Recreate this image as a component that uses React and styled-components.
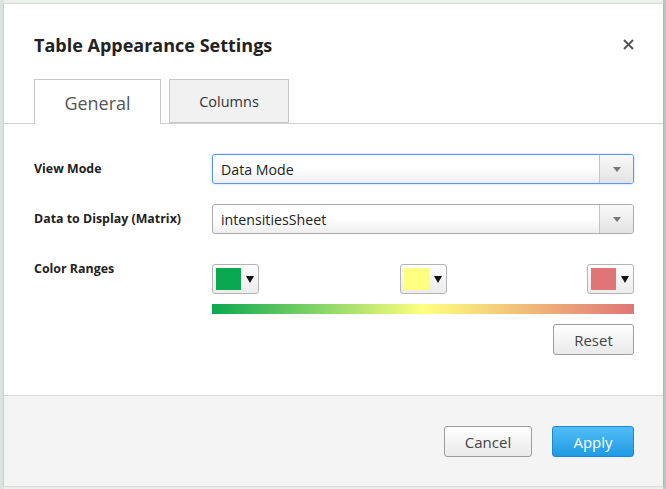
import React from "react";
import styled, { createGlobalStyle } from "styled-components";

const Global = createGlobalStyle`
  html, body { margin: 0; padding: 0; }
  body {
    width: 666px; height: 489px; overflow: hidden;
    background: #e4e8e5;
    font-family: "Open Sans", "Liberation Sans", sans-serif;
  }
`;

const Page = styled.div`
  width: 666px;
  height: 489px;
  box-sizing: border-box;
  padding: 4px 3px 3px 4px;
  background:
    linear-gradient(to right, #dfe3e0 0 4px, transparent 4px),
    linear-gradient(to left, #b9cbc1 0 3px, transparent 3px),
    #eef0ee;
`;

const Dialog = styled.div`
  width: 659px;
  height: 482px;
  background: #fff;
  display: flex;
  flex-direction: column;
  box-shadow: 0 0 2px rgba(0,0,0,0.25);
`;

const Header = styled.div`
  height: 75px;
  display: flex;
  align-items: center;
  justify-content: space-between;
  padding: 0 30px 0 30px;
  box-sizing: border-box;
`;

const Title = styled.h2`
  margin: 0;
  margin-top: 6px;
  font-size: 18px;
  font-weight: 700;
  color: #222;
`;

const Close = styled.button`
  border: 0;
  background: none;
  padding: 0;
  margin-top: 6px;
  margin-right: -1px;
  width: 11px;
  height: 11px;
  display: flex;
  cursor: pointer;
`;

const TabBar = styled.div`
  display: flex;
  gap: 8px;
  padding-left: 30px;
  border-bottom: 1px solid #cfcfcf;
  height: 44px;
`;

const Tab = styled.div`
  width: ${p => p.$w}px;
  box-sizing: border-box;
  height: ${p => (p.$active ? 45 : 44)}px;
  border: 1px solid #c8c8c8;
  border-bottom: ${p => (p.$active ? "0" : "1px solid #c8c8c8")};
  background: ${p => (p.$active ? "#fff" : "#f1f1f1")};
  display: flex;
  align-items: center;
  justify-content: center;
  font-size: ${p => (p.$active ? 18 : 14.5)}px;
  color: ${p => (p.$active ? "#555" : "#333")};
  padding-top: ${p => (p.$active ? 2 : 0)}px;
`;

const Body = styled.div`
  flex: 1;
  padding: 30px 29px 0 30px;
  display: flex;
  flex-direction: column;
`;

const Row = styled.div`
  display: grid;
  grid-template-columns: 178px 1fr;
  align-items: ${p => (p.$top ? "start" : "center")};
  margin-bottom: ${p => p.$gap || 0}px;
`;

const Label = styled.div`
  font-size: 12.4px;
  font-weight: 700;
  color: #222;
  margin-top: ${p => (p.$top ? -4 : -2)}px;
`;

const Select = styled.div`
  height: 30px;
  box-sizing: border-box;
  border: 1px solid ${p => (p.$focus ? "#5b97f0" : "#aaaaaa")};
  box-shadow: ${p => (p.$focus ? "0 0 2px rgba(80,140,240,0.5)" : "none")};
  border-radius: 3px;
  background: linear-gradient(#ffffff, #ffffff 50%, #eeeeee);
  display: flex;
  align-items: stretch;
  overflow: hidden;
`;

const SelectText = styled.div`
  flex: 1;
  display: flex;
  align-items: center;
  padding-left: 8px;
  font-size: 14.2px;
  color: #222;
`;

const SelectArrow = styled.div`
  width: 33px;
  border-left: 1px solid #c4c4c4;
  background: linear-gradient(#f9f9f9, #e3e3e3);
  display: flex;
  align-items: center;
  justify-content: center;
`;

const ColorArea = styled.div`
  display: flex;
  flex-direction: column;
`;

const Pickers = styled.div`
  display: flex;
  justify-content: space-between;
`;

const Picker = styled.div`
  width: 47px;
  height: 30px;
  box-sizing: border-box;
  border: 1px solid #b4b4b4;
  border-radius: 3px;
  background: linear-gradient(#fdfdfd, #ececec);
  display: flex;
  align-items: center;
  padding-left: 3px;
  gap: 5px;
`;

const Swatch = styled.div`
  width: 25px;
  height: 22px;
  background: ${p => p.$c};
`;

const Gradient = styled.div`
  height: 10px;
  margin-top: 10px;
  background: linear-gradient(to right, #0aa84f, #ffff80 50%, #e07575);
`;

const ResetRow = styled.div`
  display: flex;
  justify-content: flex-end;
  margin-top: 10px;
`;

const Button = styled.button`
  height: 31px;
  width: ${p => p.$w}px;
  box-sizing: border-box;
  border-radius: 3px;
  font-family: "Open Sans", "Liberation Sans", sans-serif;
  font-size: 15px;
  padding: 0;
  cursor: pointer;
  border: 1px solid ${p => (p.$primary ? "#1c89cf" : "#9c9c9c")};
  color: ${p => (p.$primary ? "#fff" : "#444")};
  background: ${p =>
    p.$primary
      ? "linear-gradient(#52bdf7, #1f9ae2)"
      : "linear-gradient(#ffffff, #e9e9e9)"};
`;

const Footer = styled.div`
  height: 91px;
  box-sizing: border-box;
  border-top: 1px solid #d9d9d9;
  background: #f4f4f4;
  display: flex;
  justify-content: flex-end;
  align-items: flex-start;
  padding: 30px 29px 0 0;
  gap: 20px;
`;

const Tri = ({ color = "#777", w = 8, h = 5 }) => (
  <svg width={w} height={h} viewBox={`0 0 ${w} ${h}`}>
    <polygon points={`0,0 ${w},0 ${w / 2},${h}`} fill={color} />
  </svg>
);

const PickerBox = ({ c }) => (
  <Picker>
    <Swatch $c={c} />
    <Tri color="#111" w={8} h={7} />
  </Picker>
);

export default function App() {
  return (
    <>
      <Global />
      <Page>
        <Dialog>
          <Header>
            <Title>Table Appearance Settings</Title>
            <Close aria-label="Close">
              <svg width="11" height="11" viewBox="0 0 11 11">
                <path d="M1 1 L10 10 M10 1 L1 10" stroke="#555" strokeWidth="2" />
              </svg>
            </Close>
          </Header>
          <TabBar>
            <Tab $active $w={127}>General</Tab>
            <Tab $w={120}>Columns</Tab>
          </TabBar>
          <Body>
            <Row $gap={20}>
              <Label>View Mode</Label>
              <Select $focus>
                <SelectText>Data Mode</SelectText>
                <SelectArrow><Tri /></SelectArrow>
              </Select>
            </Row>
            <Row $gap={30}>
              <Label>Data to Display (Matrix)</Label>
              <Select>
                <SelectText>intensitiesSheet</SelectText>
                <SelectArrow><Tri /></SelectArrow>
              </Select>
            </Row>
            <Row $top>
              <Label $top>Color Ranges</Label>
              <ColorArea>
                <Pickers>
                  <PickerBox c="#0aa84f" />
                  <PickerBox c="#ffff80" />
                  <PickerBox c="#e07575" />
                </Pickers>
                <Gradient />
                <ResetRow>
                  <Button $w={81}>Reset</Button>
                </ResetRow>
              </ColorArea>
            </Row>
          </Body>
          <Footer>
            <Button $w={88}>Cancel</Button>
            <Button $primary $w={82}>Apply</Button>
          </Footer>
        </Dialog>
      </Page>
    </>
  );
}
